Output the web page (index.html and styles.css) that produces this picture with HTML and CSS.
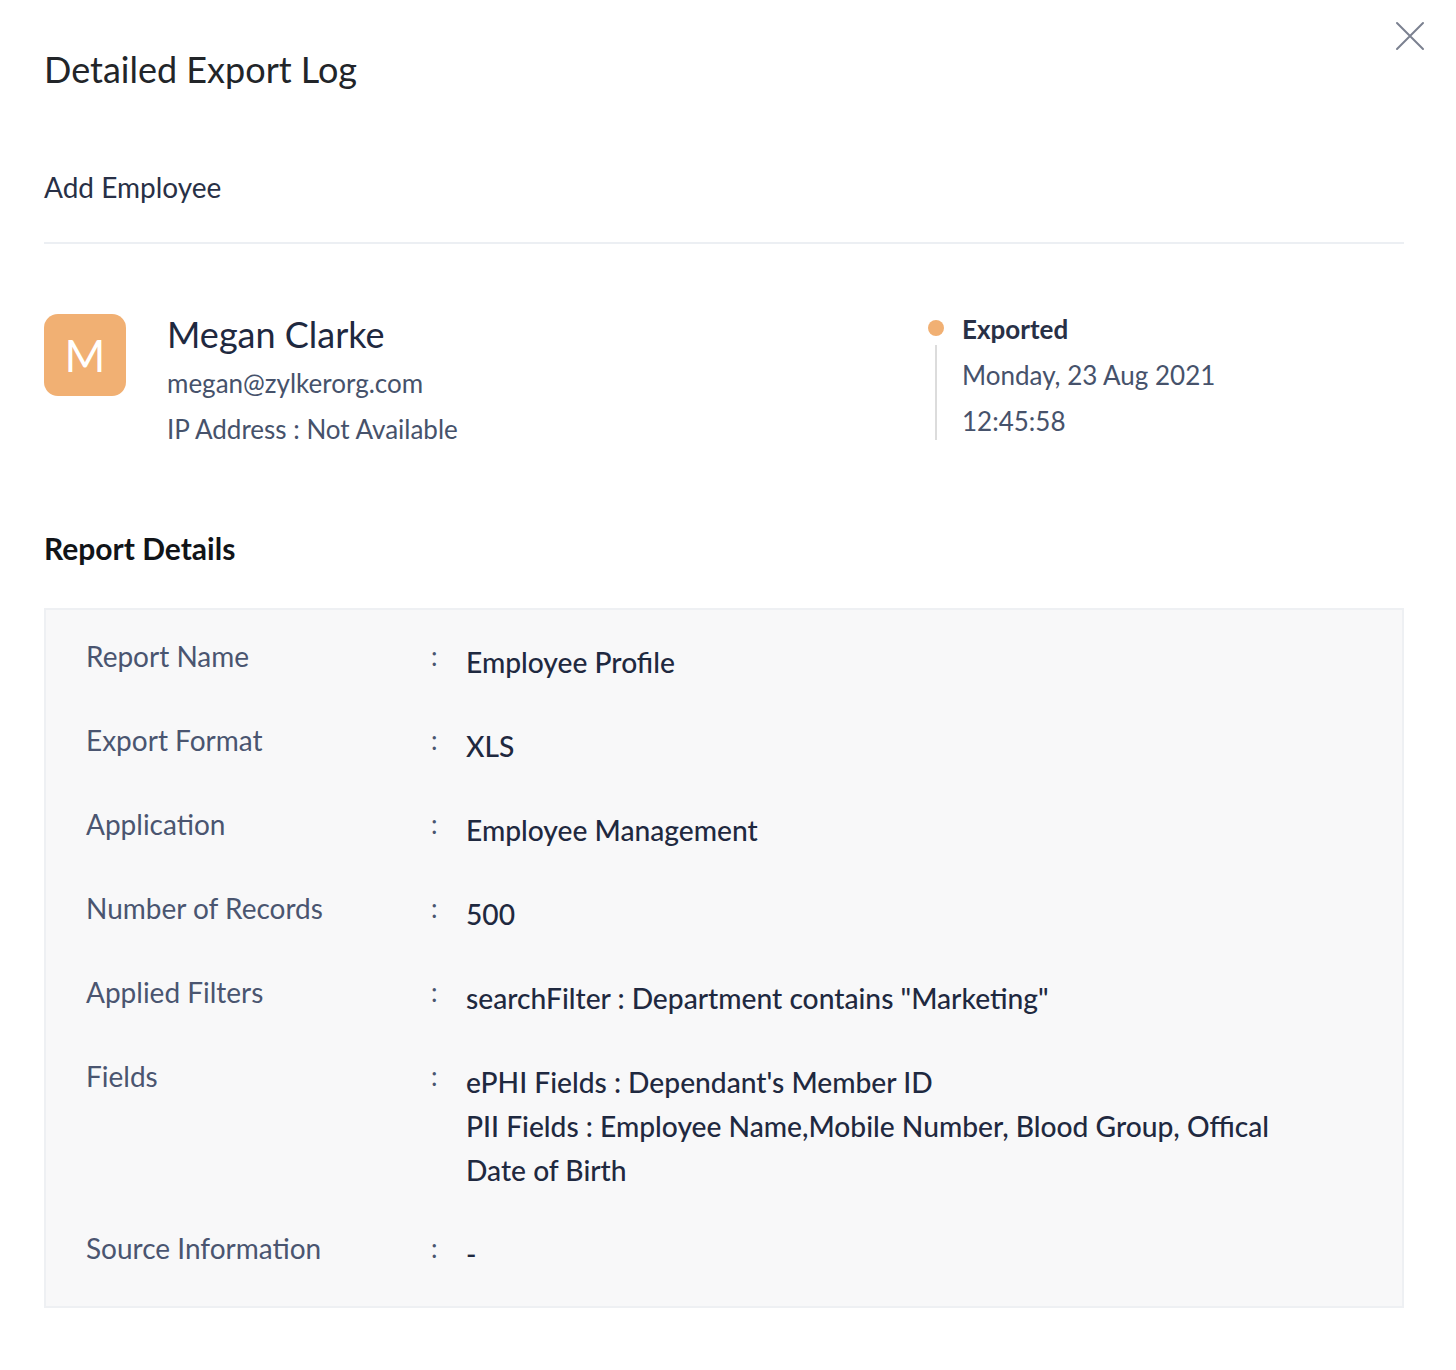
FILE: index.html
```html
<!DOCTYPE html>
<html lang="en">
<head>
  <meta charset="UTF-8">
  <meta name="viewport" content="width=device-width, initial-scale=1.0">
  <title>Detailed Export Log</title>
  <link rel="stylesheet" href="styles.css">
</head>
<body>
  <div class="panel">
    <button type="button" class="close" aria-label="Close">
      <svg width="30" height="30" viewBox="0 0 30 30"><path d="M2 2 L28 28 M28 2 L2 28" stroke="#7b8190" stroke-width="2" stroke-linecap="round" fill="none"/></svg>
    </button>

    <h1>Detailed Export Log</h1>
    <div class="action">Add Employee</div>

    <div class="profile">
      <div class="user">
        <div class="avatar">M</div>
        <div class="user-info">
          <div class="name">Megan Clarke</div>
          <div class="sub">megan@zylkerorg.com</div>
          <div class="sub">IP Address : Not Available</div>
        </div>
      </div>
      <div class="status">
        <div class="track">
          <span class="dot"></span>
          <span class="line"></span>
        </div>
        <div class="status-info">
          <div class="status-title">Exported</div>
          <div class="sub">Monday, 23 Aug 2021</div>
          <div class="sub">12:45:58</div>
        </div>
      </div>
    </div>

    <h2>Report Details</h2>
    <div class="details">
      <div class="row">
        <div class="label">Report Name</div>
        <div class="colon">:</div>
        <div class="value">Employee Profile</div>
      </div>
      <div class="row">
        <div class="label">Export Format</div>
        <div class="colon">:</div>
        <div class="value">XLS</div>
      </div>
      <div class="row">
        <div class="label">Application</div>
        <div class="colon">:</div>
        <div class="value">Employee Management</div>
      </div>
      <div class="row">
        <div class="label">Number of Records</div>
        <div class="colon">:</div>
        <div class="value">500</div>
      </div>
      <div class="row">
        <div class="label">Applied Filters</div>
        <div class="colon">:</div>
        <div class="value">searchFilter : Department contains "Marketing"</div>
      </div>
      <div class="row">
        <div class="label">Fields</div>
        <div class="colon">:</div>
        <div class="value">
          ePHI Fields : Dependant's Member ID<br>
          PII Fields : Employee Name,Mobile Number, Blood Group, Offical<br>
          Date of Birth
        </div>
      </div>
      <div class="row">
        <div class="label">Source Information</div>
        <div class="colon">:</div>
        <div class="value">-</div>
      </div>
    </div>
  </div>
</body>
</html>
```

FILE: styles.css
```css
body {
  margin: 0;
  background-color: #ffffff;
  font-family: Lato, "Open Sans", Arial, sans-serif;
  color: #1f2940;
}
.panel {
  position: relative;
  padding: 48px 52px 40px 44px;
}
.close {
  position: absolute;
  top: 21px;
  right: 31px;
  padding: 0;
  border: none;
  background: none;
  cursor: pointer;
}
h1 {
  margin: 0;
  font-size: 36px;
  line-height: 42px;
  font-weight: normal;
  color: #222529;
}
.action {
  margin-top: 80px;
  padding-bottom: 38px;
  border-bottom: 2px solid #eceff3;
  font-size: 28px;
  line-height: 34px;
  color: #283046;
}
.profile {
  display: flex;
  margin-top: 62px;
}
.user {
  flex: 1;
  display: flex;
  gap: 41px;
  padding-top: 8px;
}
.avatar {
  width: 82px;
  height: 82px;
  border-radius: 14px;
  background-color: #f1b073;
  color: #ffffff;
  font-size: 44px;
  line-height: 82px;
  text-align: center;
}
.name {
  font-size: 36px;
  line-height: 40px;
  margin-bottom: 6px;
  color: #1f2940;
}
.sub {
  font-size: 26px;
  line-height: 46px;
  color: #46526b;
}
.status {
  width: 476px;
  display: flex;
  gap: 18px;
}
.track {
  width: 16px;
  display: flex;
  flex-direction: column;
  align-items: center;
}
.dot {
  width: 16px;
  height: 16px;
  margin-top: 14px;
  border-radius: 50%;
  background-color: #f1b073;
}
.line {
  width: 2px;
  flex: 1;
  margin: 9px 0 12px;
  background-color: #dcdcdc;
}
.status-title {
  font-size: 26px;
  line-height: 46px;
  font-weight: bold;
  color: #283046;
}
h2 {
  margin: 79px 0 0;
  font-size: 30px;
  line-height: 34px;
  font-weight: bold;
  color: #111418;
}
.details {
  margin-top: 43px;
  padding: 30px 40px 30px 40px;
  border: 2px solid #eef0f3;
  background-color: #f8f8f9;
  display: flex;
  flex-direction: column;
  gap: 40px;
}
.row {
  display: flex;
  align-items: flex-start;
}
.label {
  width: 345px;
  font-size: 28px;
  line-height: 32px;
  color: #4a5570;
}
.colon {
  width: 35px;
  font-size: 26px;
  line-height: 32px;
  color: #4a5570;
}
.value {
  flex: 1;
  font-size: 28.2px;
  line-height: 44px;
  font-weight: 500;
  color: #1f2940;
}
```
